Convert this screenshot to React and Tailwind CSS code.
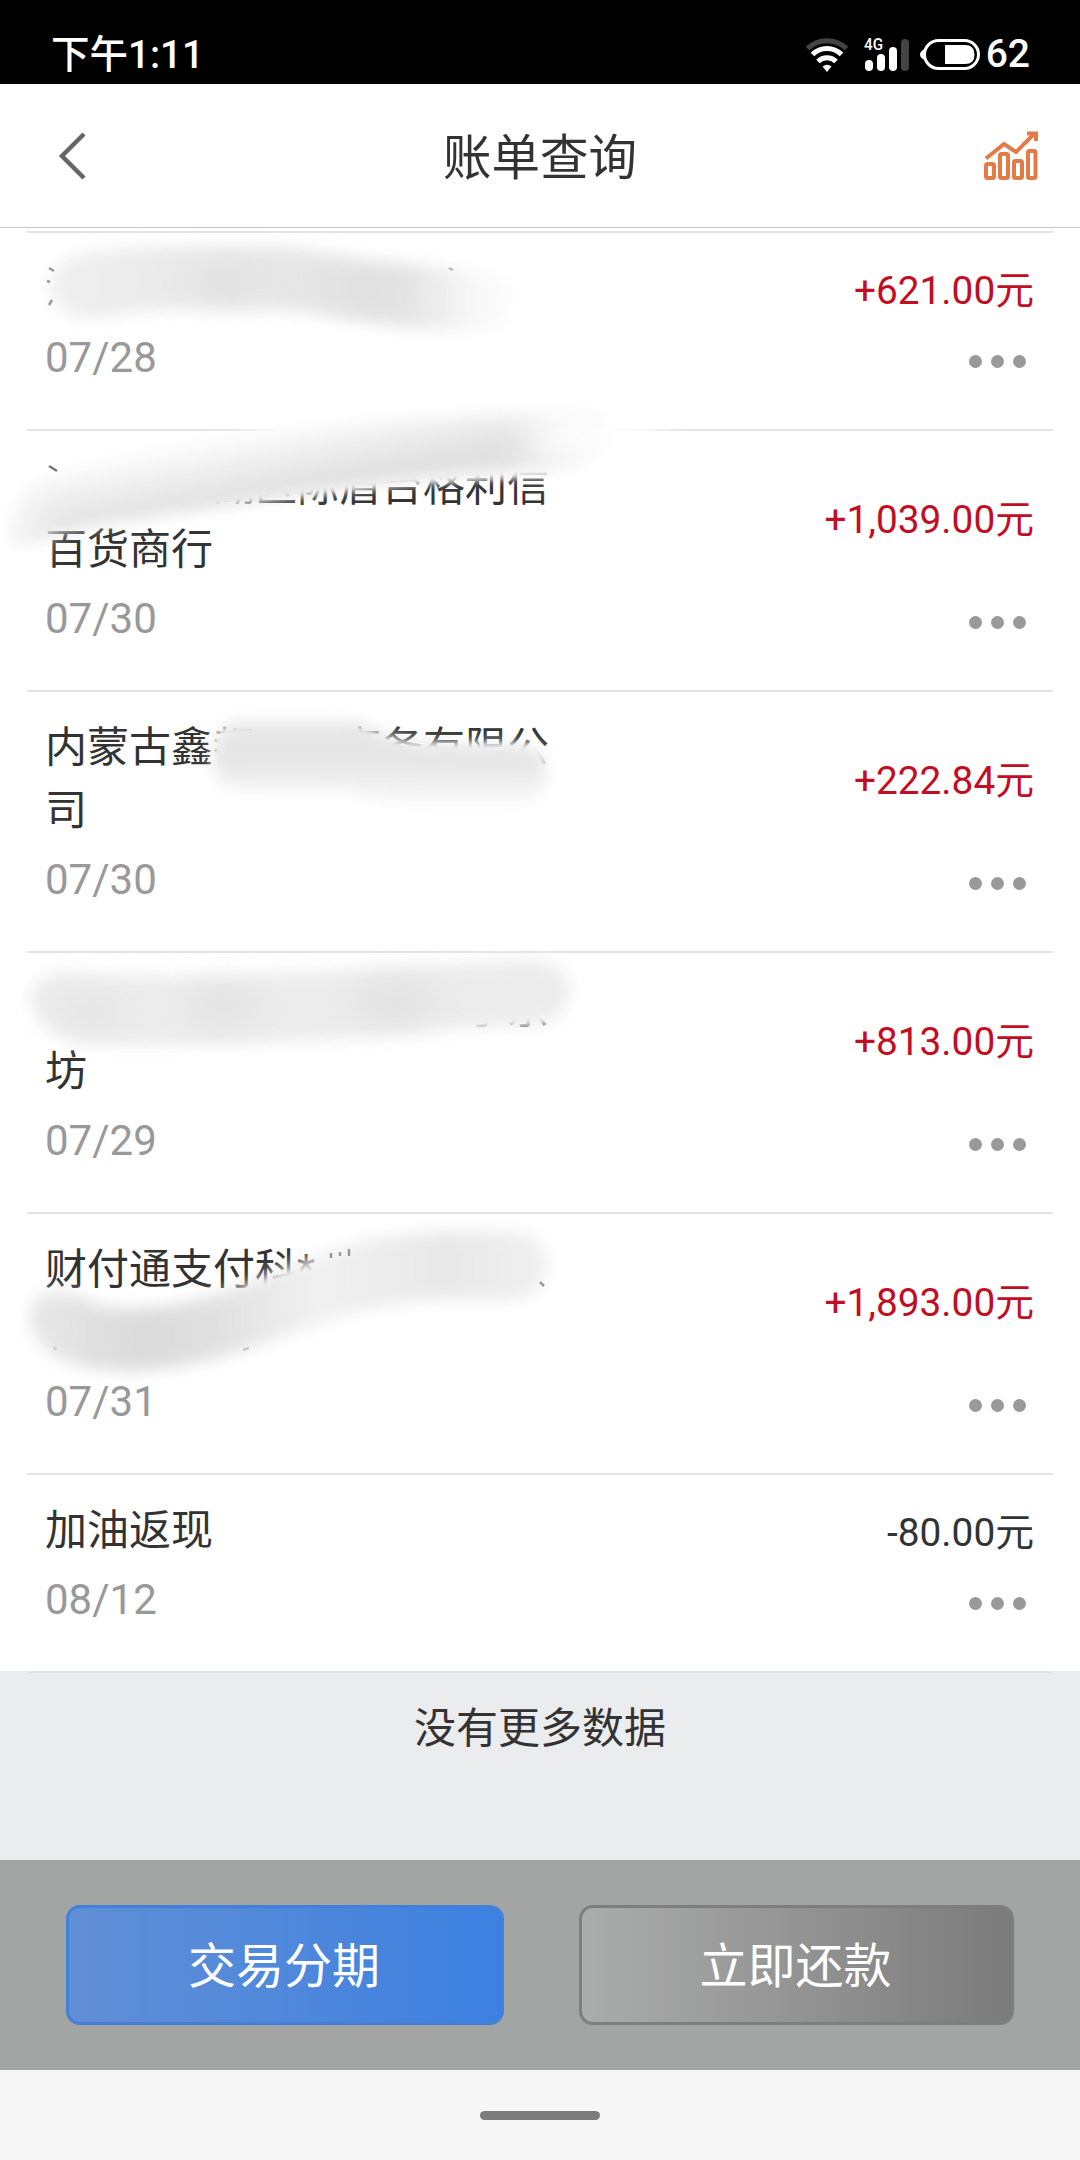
import React from "react";

const bills = [
  { name: ["\u3000"], date: "07/28", amount: "+621.00元" },
  {
    name: ["\u3000\u3000\u3000\u3000湖区际盾台格利信", "百货商行"],
    date: "07/30",
    amount: "+1,039.00元",
  },
  {
    name: ["内蒙古鑫都\u3000\u3000商务有限公", "司"],
    date: "07/30",
    amount: "+222.84元",
  },
  {
    name: ["\u3000\u3000\u3000\u3000\u3000\u3000\u3000\u3000\u3000\u3000手京", "坊"],
    date: "07/29",
    amount: "+813.00元",
  },
  { name: ["财付通支付科*", "\u3000"], date: "07/31", amount: "+1,893.00元" },
  { name: ["加油返现"], date: "08/12", amount: "-80.00元" },
];

const StatusBar = () => (
  <div className="h-[84px] bg-black text-white flex items-center justify-between pl-[51px] pr-[50px] pt-[25px]">
    <span className="text-[38.500px] leading-[60px] font-medium">下午1:11</span>
    <div className="flex items-center">
      <svg width="42" height="36" viewBox="0 0 42 36" fill="none" strokeWidth="5">
        <path d="M1.5 11.5C12.5 1 29.5 1 40.5 11.5" stroke="#444" />
        <path d="M6.5 17.5C14.5 9.5 27.5 9.5 35.5 17.5" stroke="#fff" />
        <path d="M12 24.5C17 19.5 25 19.5 30 24.5" stroke="#fff" />
        <path d="M16.5 29.5Q21 26 25.5 29.5L21 35Z" fill="#fff" />
      </svg>
      <svg className="ml-[14px]" width="48" height="44" viewBox="-2 -4 48 44">
        <text x="0" y="13" fontSize="16" fontWeight="500" fill="#fff" textLength="19" lengthAdjust="spacingAndGlyphs">
          4G
        </text>
        <rect x="1" y="23" width="8" height="11" rx="4" fill="#fff" />
        <rect x="13" y="17" width="8" height="17" rx="4" fill="#fff" />
        <rect x="25" y="10" width="8" height="24" rx="4" fill="#fff" />
        <rect x="37" y="2" width="8" height="32" rx="4" fill="#444" />
      </svg>
      <svg className="ml-[10px]" width="62" height="36" viewBox="0 0 62 36">
        <path d="M5 12Q0 14 0 17.500T5 23Z" fill="#fff" />
        <rect x="4.500" y="3.500" width="54" height="28" rx="14" fill="none" stroke="#fff" strokeWidth="3" />
        <path d="M25 8H45Q54.500 8 54.500 17.500T45 27H25Z" fill="#fff" />
      </svg>
      <span className="ml-1 text-[39px] leading-[60px] pb-px font-medium">62</span>
    </div>
  </div>
);

const Header = () => (
  <div className="h-[144px] bg-white border-b border-[#c6c6c6] grid grid-cols-[1fr_auto_1fr] items-center pl-[57px] pr-[42px]">
    <svg width="54" height="50" viewBox="0 0 54 50" fill="none" stroke="#666" strokeWidth="4.500">
      <path d="M27 3L5 25L27 47" />
    </svg>
    <h1 className="text-[48.500px] leading-[72px] text-[#333] pt-[6px] pr-[15px]">账单查询</h1>
    <svg className="justify-self-end" width="54" height="50" viewBox="0 0 54 50" fill="none" stroke="#e37b48" strokeWidth="4">
      <path d="M2 27.500L20 13L32 21L50 3" />
      <path d="M43 2.500H52V10" />
      <rect x="2" y="33" width="8" height="14" rx="1.500" />
      <rect x="16" y="23" width="8" height="24" rx="1.500" />
      <rect x="30" y="30" width="8" height="17" rx="1.500" />
      <rect x="44" y="20" width="7.500" height="27" rx="1.500" />
    </svg>
  </div>
);

const BillRow = ({ bill }) => {
  const isExpense = bill.amount.startsWith("+");
  return (
    <div className="mx-[27px] border-t-2 border-[#e3e3e3] px-[18px] pt-[24px] pb-[40px]">
      <div className="flex items-center justify-between">
        <div className="text-[42px] leading-[63px] text-[#333] whitespace-pre">
          {bill.name.map((line, i) => (
            <div key={i}>{line}</div>
          ))}
        </div>
        <div
          className={
            isExpense
              ? "text-[38.800px] leading-[58px] text-[#c30d23] pt-[4px] pr-px"
              : "text-[38.800px] leading-[58px] text-[#333] pt-[4px] pr-px"
          }
        >
          {bill.amount}
        </div>
      </div>
      <div className="flex items-center justify-between mt-[6px]">
        <span className="text-[42px] leading-[63px] text-[#999]">{bill.date}</span>
        <div className="flex items-center gap-[9px] pr-[9px] pt-[7px]">
          <span className="w-[13px] h-[13px] rounded-full bg-[#999]" />
          <span className="w-[13px] h-[13px] rounded-full bg-[#999]" />
          <span className="w-[13px] h-[13px] rounded-full bg-[#999]" />
        </div>
      </div>
    </div>
  );
};

// Brushed strokes that hide the merchant names
const Smudges = () => (
  <svg className="absolute left-0 top-0 pointer-events-none" width="1080" height="1443" viewBox="0 228 1080 1443">
    <defs>
      <filter id="wipe" x="-20%" y="-50%" width="140%" height="200%">
        <feGaussianBlur stdDeviation="3" />
      </filter>
      <filter id="edge" x="-20%" y="-50%" width="140%" height="200%">
        <feGaussianBlur stdDeviation="8" />
      </filter>
      <filter id="soft" x="-60%" y="-60%" width="220%" height="220%">
        <feGaussianBlur stdDeviation="18" />
      </filter>
      <linearGradient id="s1" gradientUnits="userSpaceOnUse" x1="40" y1="0" x2="525" y2="0">
        <stop offset="0" stopColor="#f0f0f0" />
        <stop offset="0.35" stopColor="#e8e8e8" />
        <stop offset="0.75" stopColor="#e4e4e4" />
        <stop offset="0.9" stopColor="#f8f8f8" />
        <stop offset="1" stopColor="#fff" />
      </linearGradient>
      <linearGradient id="s2" gradientUnits="userSpaceOnUse" x1="310" y1="416" x2="326" y2="500">
        <stop offset="0" stopColor="#fff" />
        <stop offset="0.4" stopColor="#efefef" />
        <stop offset="0.8" stopColor="#dfdfdf" />
        <stop offset="1" stopColor="#e4e4e4" />
      </linearGradient>
      <linearGradient id="s3" gradientUnits="userSpaceOnUse" x1="380" y1="720" x2="380" y2="808">
        <stop offset="0" stopColor="#e6e6e6" />
        <stop offset="0.5" stopColor="#e6e6e6" />
        <stop offset="1" stopColor="#fcfcfc" />
      </linearGradient>
      <linearGradient id="s5" gradientUnits="userSpaceOnUse" x1="30" y1="0" x2="550" y2="0">
        <stop offset="0" stopColor="#e8e8e8" />
        <stop offset="0.22" stopColor="#dadada" />
        <stop offset="0.38" stopColor="#e2e2e2" />
        <stop offset="0.55" stopColor="#f1f1f1" />
        <stop offset="0.8" stopColor="#e8e8e8" />
        <stop offset="1" stopColor="#f0f0f0" />
      </linearGradient>
    </defs>

    <g fill="#fff" filter="url(#wipe)">
      <path d="M290 424H616V440L560 475Q420 482 350 490Q290 497 200 507H60V475Z" />
      <path d="M214 738L222 728H360L385 738L400 744L540 744L552 784H215Z" />
      <path d="M450 980H560V1022L500 1025L450 1030Z" />
      <path d="M245 1288L300 1269L320 1290L260 1310Z" />
    </g>

    <path
      d="M50 285Q52 258 90 253Q130 246 200 247H280Q320 250 365 262L450 268Q510 272 520 290L500 330Q420 332 350 320Q310 310 250 309H170Q130 311 105 317Q55 326 50 285Z"
      fill="url(#s1)"
      filter="url(#edge)"
    />
    <g filter="url(#soft)" fill="#d8d8d8">
      <ellipse cx="225" cy="284" rx="34" ry="16" opacity="0.5" />
      <ellipse cx="365" cy="287" rx="46" ry="16" opacity="0.5" />
    </g>

    <path
      d="M12 540Q6 490 60 471Q110 452 190 442Q270 430 380 421Q470 414 600 414L610 440Q590 468 540 470Q450 474 350 487Q270 497 190 511Q110 522 60 532Q20 548 12 540Z"
      fill="url(#s2)"
      filter="url(#edge)"
    />
    <ellipse cx="596" cy="436" rx="72" ry="40" fill="#fff" opacity="0.9" filter="url(#soft)" />
    <path d="M0 560L-4 480L20 490L46 540Z" fill="#fff" opacity="0.8" filter="url(#soft)" />

    <path
      d="M214 765Q212 722 242 722H345Q365 722 385 735Q405 744 460 745H515Q546 748 546 770Q546 803 515 803H420Q370 802 340 788H245Q217 788 214 765Z"
      fill="url(#s3)"
      filter="url(#edge)"
    />

    <path
      d="M30 1000Q33 971 75 973Q150 979 250 975Q380 969 450 964L530 960Q568 961 569 990Q568 1021 530 1025Q460 1027 400 1034Q290 1043 190 1045H100Q42 1042 30 1000Z"
      fill="#ececec"
      filter="url(#edge)"
    />
    <g filter="url(#soft)" fill="#d8d8d8">
      <ellipse cx="90" cy="1012" rx="34" ry="14" opacity="0.4" />
      <ellipse cx="222" cy="1006" rx="36" ry="18" opacity="0.6" />
      <ellipse cx="395" cy="1002" rx="42" ry="20" opacity="0.6" />
    </g>

    <path
      d="M29 1320Q29 1291 62 1292Q80 1295 95 1304Q120 1312 170 1306Q220 1296 260 1279Q300 1260 350 1245Q400 1231 460 1232H515Q547 1235 547 1265Q547 1296 515 1299H440Q390 1301 340 1317Q290 1334 240 1351Q180 1371 120 1371Q38 1368 29 1320Z"
      fill="url(#s5)"
      filter="url(#edge)"
    />

    {/* strokes left peeking out around the brush */}
    <g fill="none" stroke="#999" strokeWidth="2.500">
      <path d="M49 268L54 271M47 281L50 282M52 300L49 305" />
      <path d="M449 268L453 270" stroke="#bbb" />
      <path d="M49 466L57 471" stroke="#777" />
      <path d="M331 1253V1258M340 1252V1256M349 1249V1256M540 1282L544 1286" />
      <path d="M243 1350L249 1348M54 1347L56 1350" stroke="#ccc" />
    </g>
  </svg>
);

const App = () => {
  return (
    <div className="w-[1080px] h-[2160px] flex flex-col bg-[#ebecee] overflow-hidden font-[Roboto,'Noto_Sans_CJK_SC',sans-serif]">
      <StatusBar />
      <Header />

      <div className="relative bg-white pt-[3px]">
        {bills.map((bill, i) => (
          <BillRow key={i} bill={bill} />
        ))}
        <Smudges />
      </div>

      <div className="flex-1">
        <div className="mx-[27px] border-t-2 border-[#e2e2e2] pt-[24px] text-center text-[42px] leading-[63px] text-[#333]">
          没有更多数据
        </div>
      </div>

      <div className="h-[210px] bg-[#a3a5a4] flex items-center justify-between px-[66px]">
        <button className="w-[438px] h-[120px] rounded-[14px] border-3 border-[#4280dc] bg-linear-to-r from-[#618fd5] to-[#3c80e1] text-white text-[48px] pt-[3px] pr-0.5">
          交易分期
        </button>
        <button className="w-[435px] h-[120px] rounded-[14px] border-3 border-[#7e7e7e] bg-linear-to-r from-[#abadac] to-[#7b7b7b] text-white text-[48px] pt-[3px] pr-0.5">
          立即还款
        </button>
      </div>

      <div className="h-[90px] bg-[#f7f7f7] flex items-center justify-center">
        <div className="w-[120px] h-[9px] rounded-full bg-[#7c7c7c]" />
      </div>
    </div>
  );
};

export default App;
